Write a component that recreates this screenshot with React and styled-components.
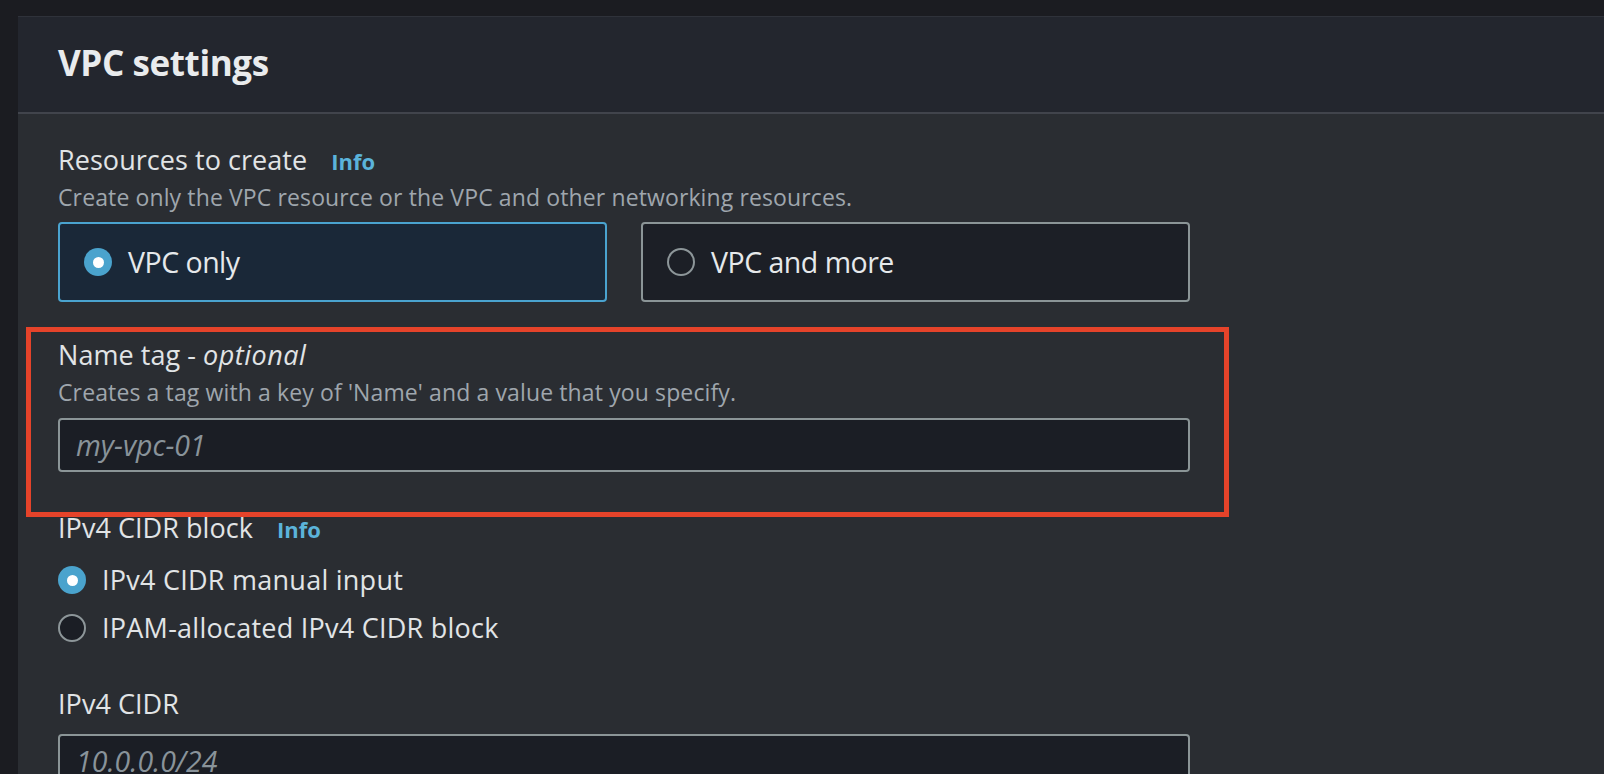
import React from 'react';
import styled, { createGlobalStyle } from 'styled-components';

const GlobalStyle = createGlobalStyle`
  html, body {
    margin: 0;
    padding: 0;
    overflow: hidden;
    background: #1b1c21;
  }
  body {
    font-family: 'Open Sans', 'Noto Sans', sans-serif;
    -webkit-font-smoothing: antialiased;
  }
`;

const Page = styled.div`
  height: 100vh;
  box-sizing: border-box;
  padding: 16px 0 0 18px;
  overflow: hidden;
`;

const Panel = styled.section`
  min-height: 100%;
  background: #2a2d32;
  border-top: 1px solid #2f323a;
`;

const Header = styled.header`
  background: #23262e;
  border-bottom: 2px solid #41444c;
  padding: 24px 40px 27px;
`;

const Title = styled.h2`
  margin: 0;
  font-size: 35px;
  line-height: 44px;
  font-weight: 700;
  letter-spacing: -0.4px;
  color: #e9ebed;
`;

const Body = styled.div`
  width: 1132px;
  padding: 28px 40px 0;
  display: flex;
  flex-direction: column;
`;

const Field = styled.div`
  position: relative;
  display: flex;
  flex-direction: column;
  margin-top: ${(p) => p.$top || 0}px;
`;

const Highlight = styled.div`
  position: absolute;
  top: -10px;
  left: -32px;
  right: -39px;
  bottom: -45px;
  border: 5px solid #e5432a;
  pointer-events: none;
`;

const LabelRow = styled.div`
  display: flex;
  align-items: baseline;
  gap: 24px;
`;

const Label = styled.label`
  font-size: 27px;
  line-height: 36px;
  letter-spacing: 0.05px;
  color: #e1e4e6;

  em {
    font-style: italic;
    letter-spacing: 0.5px;
  }
`;

const Info = styled.a`
  font-size: 22px;
  font-weight: 700;
  color: #5bb3da;
  text-decoration: none;
  cursor: pointer;
`;

const Description = styled.div`
  margin-top: 4px;
  font-size: 23px;
  line-height: 30px;
  letter-spacing: 0.12px;
  color: #9fa6ad;
`;

const TileGrid = styled.div`
  margin-top: 10px;
  display: grid;
  grid-template-columns: 1fr 1fr;
  gap: 34px;
`;

const Tile = styled.div`
  height: 80px;
  box-sizing: border-box;
  display: flex;
  align-items: center;
  gap: 16px;
  padding: 0 24px;
  border: 2px solid ${(p) => (p.$selected ? '#4aa3cf' : '#8b9597')};
  border-radius: 4px;
  background: ${(p) => (p.$selected ? '#1a2838' : '#1c1f26')};
  font-size: 28.5px;
  line-height: 36px;
  letter-spacing: -0.5px;
  color: #e6e9eb;
  cursor: pointer;
`;

const Radio = styled.span`
  position: relative;
  flex: none;
  width: 28px;
  height: 28px;
  box-sizing: border-box;
  border-radius: 50%;
  border: ${(p) => (p.$checked ? 'none' : '2px solid #8d9699')};
  background: ${(p) => (p.$checked ? '#4aa3cd' : p.$fill || 'transparent')};

  &::after {
    content: '';
    display: ${(p) => (p.$checked ? 'block' : 'none')};
    position: absolute;
    top: 50%;
    left: 50%;
    width: 11px;
    height: 11px;
    margin: -5.5px 0 0 -5.5px;
    border-radius: 50%;
    background: #ffffff;
  }
`;

const RadioGroup = styled.div`
  margin-top: 15px;
  display: flex;
  flex-direction: column;
  gap: 10px;
`;

const RadioRow = styled.div`
  height: 38px;
  display: flex;
  align-items: center;
  gap: 16px;
  font-size: 27px;
  line-height: 36px;
  letter-spacing: 0.25px;
  color: #e1e4e6;
  cursor: pointer;
`;

const TextInput = styled.input`
  margin-top: ${(p) => p.$top || 10}px;
  width: 100%;
  height: 54px;
  box-sizing: border-box;
  padding: 0 16px;
  border: 2px solid #8b9597;
  border-radius: 4px;
  background: #1b1e25;
  color: #e6e9eb;
  font-family: inherit;
  font-size: 28.5px;
  outline: none;

  &::placeholder {
    color: #89939a;
    font-style: italic;
  }
`;

export default function App() {
  return (
    <>
      <GlobalStyle />
      <Page>
        <Panel>
          <Header>
            <Title>VPC settings</Title>
          </Header>
          <Body>
            <Field>
              <LabelRow>
                <Label>Resources to create</Label>
                <Info>Info</Info>
              </LabelRow>
              <Description>
                Create only the VPC resource or the VPC and other networking resources.
              </Description>
              <TileGrid>
                <Tile $selected>
                  <Radio $checked />
                  <span>VPC only</span>
                </Tile>
                <Tile>
                  <Radio />
                  <span>VPC and more</span>
                </Tile>
              </TileGrid>
            </Field>

            <Field $top={35}>
              <Highlight />
              <Label>
                Name tag - <em>optional</em>
              </Label>
              <Description>
                Creates a tag with a key of 'Name' and a value that you specify.
              </Description>
              <TextInput $top={11} placeholder="my-vpc-01" />
            </Field>

            <Field $top={38}>
              <LabelRow>
                <Label>IPv4 CIDR block</Label>
                <Info>Info</Info>
              </LabelRow>
              <RadioGroup>
                <RadioRow>
                  <Radio $checked />
                  <span>IPv4 CIDR manual input</span>
                </RadioRow>
                <RadioRow>
                  <Radio $fill="#1b1e25" />
                  <span>IPAM-allocated IPv4 CIDR block</span>
                </RadioRow>
              </RadioGroup>
            </Field>

            <Field $top={39}>
              <Label>IPv4 CIDR</Label>
              <TextInput $top={12} placeholder="10.0.0.0/24" />
            </Field>
          </Body>
        </Panel>
      </Page>
    </>
  );
}
